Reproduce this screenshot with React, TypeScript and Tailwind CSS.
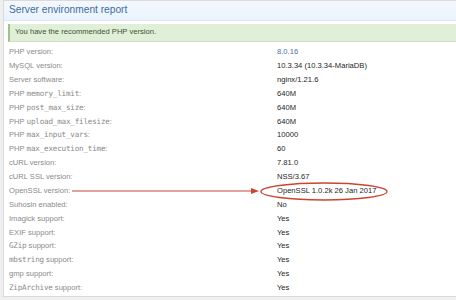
import React from 'react';

type Row = { label: React.ReactNode; value: string; link?: boolean };

const mono = (s: string) => <span className="font-['DejaVu_Sans_Mono',monospace] tracking-[-0.2px]">{s}</span>;

const rows: Row[] = [
  { label: 'PHP version:', value: '8.0.16', link: true },
  { label: 'MySQL version:', value: '10.3.34 (10.3.34-MariaDB)' },
  { label: 'Server software:', value: 'nginx/1.21.6' },
  { label: <>PHP {mono('memory_limit')}:</>, value: '640M' },
  { label: <>PHP {mono('post_max_size')}:</>, value: '640M' },
  { label: <>PHP {mono('upload_max_filesize')}:</>, value: '640M' },
  { label: <>PHP {mono('max_input_vars')}:</>, value: '10000' },
  { label: <>PHP {mono('max_execution_time')}:</>, value: '60' },
  { label: 'cURL version:', value: '7.81.0' },
  { label: 'cURL SSL version:', value: 'NSS/3.67' },
  { label: 'OpenSSL version:', value: 'OpenSSL 1.0.2k 26 Jan 2017' },
  { label: 'Suhosin enabled:', value: 'No' },
  { label: 'Imagick support:', value: 'Yes' },
  { label: 'EXIF support:', value: 'Yes' },
  { label: <>{mono('GZip')} support:</>, value: 'Yes' },
  { label: <>{mono('mbstring')} support:</>, value: 'Yes' },
  { label: 'gmp support:', value: 'Yes' },
  { label: <>{mono('ZipArchive')} support:</>, value: 'Yes' },
];

export default function App() {
  return (
    <div className="relative w-[456px] h-[300px] overflow-hidden bg-[#efefef] font-['Liberation_Sans',Arial,sans-serif]">
      <div className="ml-[3px] h-[297px] bg-white border-l border-t border-b border-[#dadada]">
        <div className="h-[20px] flex items-center pl-[5px] bg-gradient-to-b from-[#f4f8fd] to-[#eaf3fd] border-b border-[#dfe6ee]">
          <h2 className="text-[10.2px] text-[#3d6d9f] leading-none">Server environment report</h2>
        </div>

        <div className="ml-[4px] mt-[2.5px] h-[18px] flex items-center pl-[5px] bg-[#e0efd7] border-l-2 border-[#9cc483] border-b border-b-[#d0dcc8] text-[7.6px] text-[#3f4f35]">
          You have the recommended PHP version.
        </div>

        <div className="mt-[3.5px]">
          {rows.map((r, i) => (
            <div key={i} className="h-[13.88px] flex items-center text-[7.6px] leading-none">
              <div className="w-[273px] pl-[5px] text-[#8a8a8a]">{r.label}</div>
              <div className={r.link ? 'text-[#4a6fa8]' : 'text-[#1e1e1e]'}>{r.value}</div>
            </div>
          ))}
        </div>
      </div>

      {/* red annotation drawn over the table */}
      <svg className="absolute left-0 top-0 pointer-events-none" width="456" height="300">
        <line x1="72" y1="191" x2="252" y2="191" stroke="#c9452f" strokeWidth="1.2" />
        <polygon points="251,188 259,191 251,194" fill="#c9452f" />
        <ellipse cx="324" cy="191.5" rx="63" ry="8.5" fill="none" stroke="#c9452f" strokeWidth="1.3" />
      </svg>
    </div>
  );
}
